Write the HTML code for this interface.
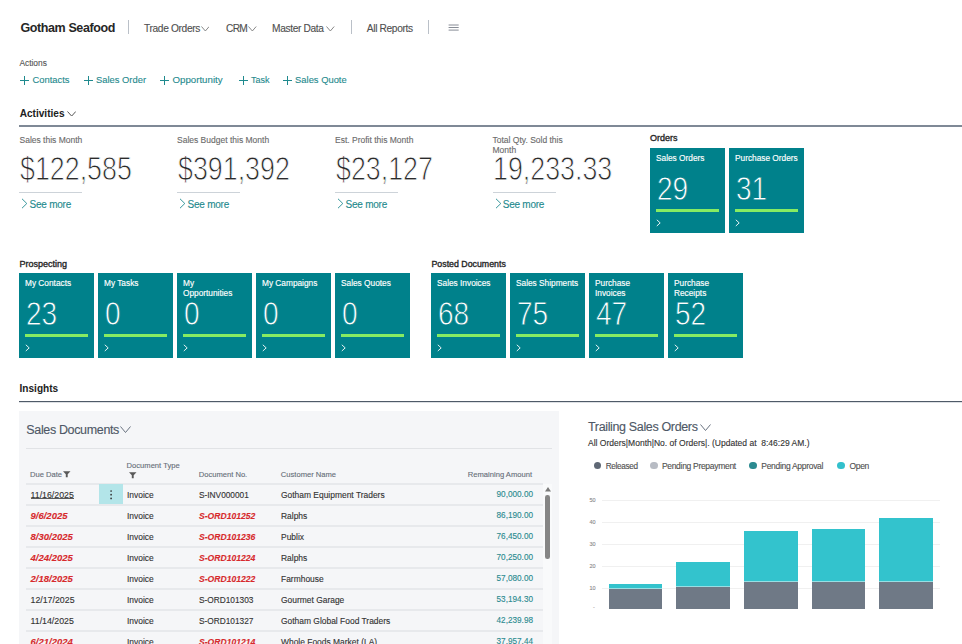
<!DOCTYPE html>
<html><head><meta charset="utf-8">
<style>
html,body{margin:0;padding:0;background:#fff;width:962px;height:644px;overflow:hidden;position:relative;font-family:"Liberation Sans",sans-serif;}
.a{position:absolute;line-height:1;white-space:nowrap;-webkit-text-stroke-width:0.12px;}
.tile .t{-webkit-text-stroke-width:0.15px;}
.nav{font-size:10.2px;color:#505050;top:24.1px;letter-spacing:-0.35px;}
.sep{position:absolute;width:1px;background:#bac0c8;top:20px;height:14px;}
.chev{display:inline-block;width:4px;height:4px;border-right:1px solid #7a7a7a;border-bottom:1px solid #7a7a7a;transform:rotate(45deg);margin-left:3px;position:relative;top:-3px;}
.act{font-size:9.4px;color:#1f8a8e;top:75.4px;}
.plus{position:absolute;width:9px;height:9px;}
.plus:before{content:"";position:absolute;left:4px;top:0;width:1px;height:9px;background:#1f8a8e;}
.plus:after{content:"";position:absolute;left:0;top:4px;width:9px;height:1px;background:#1f8a8e;}
.klbl{font-size:8.5px;color:#6b6b6b;top:136px;}
.big{font-size:32.5px;color:#2b2b2b;top:153.3px;transform-origin:0 0;transform:scaleX(0.825);-webkit-text-stroke:0.9px #fff;}
.kul{position:absolute;top:192px;height:1px;width:63px;background:#cdd3d9;}
.see{font-size:10px;color:#1f8a8e;top:200.4px;letter-spacing:-0.25px;}
.sch{position:absolute;width:5px;height:5px;border-right:1px solid #1f8a8e;border-bottom:1px solid #1f8a8e;transform:rotate(-45deg);}
.glbl{font-size:9px;font-weight:400;color:#262626;-webkit-text-stroke:0.35px #262626;}
.tile{position:absolute;width:75px;height:85px;background:#00818b;color:#fff;}
.tile .t{position:absolute;left:6px;top:5.2px;font-size:8.3px;line-height:10px;white-space:normal;width:66px;}
.tile .n{position:absolute;left:7px;top:23.7px;font-size:33px;line-height:1;transform-origin:0 0;transform:scaleX(0.85);-webkit-text-stroke:0.8px #00818b;}
.tile .g{position:absolute;left:6px;top:61px;width:63px;height:3px;background:#86ec62;}
.tile .c{position:absolute;left:5.5px;top:71.3px;}
.hd{font-size:7.6px;color:#666e78;}
.rw{font-size:8.45px;color:#333;}
</style></head><body>

<!-- header -->
<div class="a" style="left:20.5px;top:22.2px;font-size:12.5px;font-weight:700;color:#262626;-webkit-text-stroke-width:0;letter-spacing:-0.4px;">Gotham Seafood</div>
<div class="sep" style="left:128px;"></div>
<div class="a nav" style="left:144px;">Trade Orders</div>
<div class="a nav" style="left:226px;letter-spacing:-0.7px;">CRM</div>
<div class="a nav" style="left:272px;">Master Data</div>
<div class="sep" style="left:351px;"></div>
<div class="a nav" style="left:366.8px;">All Reports</div>
<div class="sep" style="left:428px;"></div>
<svg style="position:absolute;left:448px;top:22px" width="12" height="11" viewBox="0 0 12 11"><path d="M0.6 3H10.7M0.6 5.5H10.7M0.6 8.1H10.7" stroke="#7a808a" stroke-width="0.9" fill="none"/></svg>

<!-- actions -->
<div class="a" style="left:19.4px;top:59.3px;font-size:8.4px;color:#555;">Actions</div>
<div class="plus" style="left:20px;top:75.5px;"></div><div class="a act" style="left:32.5px;">Contacts</div>
<div class="plus" style="left:84px;top:75.5px;"></div><div class="a act" style="left:96px;">Sales Order</div>
<div class="plus" style="left:160px;top:75.5px;"></div><div class="a act" style="left:172.5px;font-size:9.7px;top:75.2px;">Opportunity</div>
<div class="plus" style="left:238.6px;top:75.5px;"></div><div class="a act" style="left:251.1px;font-size:9px;top:75.8px;">Task</div>
<div class="plus" style="left:282.5px;top:75.5px;"></div><div class="a act" style="left:295.1px;">Sales Quote</div>

<!-- activities -->
<div class="a" style="left:19.7px;top:108.8px;font-size:10.1px;font-weight:700;color:#212121;-webkit-text-stroke-width:0;">Activities</div>
<div style="position:absolute;left:19px;top:125px;width:943px;height:2px;background:#7f8996;"></div>

<div class="a klbl" style="left:19.5px;">Sales this Month</div>
<div class="a big" style="left:20px;">$122,585</div>
<div class="kul" style="left:19px;"></div>
<svg style="position:absolute;left:20.7px;top:198.3px" width="7" height="11" viewBox="0 0 7 11"><path d="M1 0.8L5.8 5.5L1 10.2" fill="none" stroke="#1f8a8e" stroke-width="0.9"/></svg><div class="a see" style="left:29.6px;">See more</div>

<div class="a klbl" style="left:177px;">Sales Budget this Month</div>
<div class="a big" style="left:178px;">$391,392</div>
<div class="kul" style="left:177px;"></div>
<svg style="position:absolute;left:178.7px;top:198.3px" width="7" height="11" viewBox="0 0 7 11"><path d="M1 0.8L5.8 5.5L1 10.2" fill="none" stroke="#1f8a8e" stroke-width="0.9"/></svg><div class="a see" style="left:187.6px;">See more</div>

<div class="a klbl" style="left:335px;">Est. Profit this Month</div>
<div class="a big" style="left:336px;">$23,127</div>
<div class="kul" style="left:335px;"></div>
<svg style="position:absolute;left:336.7px;top:198.3px" width="7" height="11" viewBox="0 0 7 11"><path d="M1 0.8L5.8 5.5L1 10.2" fill="none" stroke="#1f8a8e" stroke-width="0.9"/></svg><div class="a see" style="left:345.6px;">See more</div>

<div class="a klbl" style="left:492.5px;white-space:normal;width:80px;line-height:10px;top:134.5px;">Total Qty. Sold this Month</div>
<div class="a big" style="left:493px;">19,233.33</div>
<div class="kul" style="left:493px;"></div>
<svg style="position:absolute;left:494.7px;top:198.3px" width="7" height="11" viewBox="0 0 7 11"><path d="M1 0.8L5.8 5.5L1 10.2" fill="none" stroke="#1f8a8e" stroke-width="0.9"/></svg><div class="a see" style="left:502.8px;">See more</div>

<!-- orders -->
<div class="a glbl" style="left:650px;top:134.2px;">Orders</div>
<div class="tile" style="left:650px;top:148px;"><div class="t">Sales Orders</div><div class="n">29</div><div class="g"></div><svg class="c" width="6" height="8" viewBox="0 0 6 8"><path d="M0.8 0.8L4.2 3.9L0.8 7" fill="none" stroke="#fff" stroke-width="0.9"/></svg></div>
<div class="tile" style="left:729px;top:148px;"><div class="t">Purchase Orders</div><div class="n">31</div><div class="g"></div><svg class="c" width="6" height="8" viewBox="0 0 6 8"><path d="M0.8 0.8L4.2 3.9L0.8 7" fill="none" stroke="#fff" stroke-width="0.9"/></svg></div>

<!-- prospecting -->
<div class="a glbl" style="left:19.4px;top:259.7px;">Prospecting</div>
<div class="tile" style="left:19px;top:273px;"><div class="t">My Contacts</div><div class="n">23</div><div class="g"></div><svg class="c" width="6" height="8" viewBox="0 0 6 8"><path d="M0.8 0.8L4.2 3.9L0.8 7" fill="none" stroke="#fff" stroke-width="0.9"/></svg></div>
<div class="tile" style="left:98px;top:273px;"><div class="t">My Tasks</div><div class="n">0</div><div class="g"></div><svg class="c" width="6" height="8" viewBox="0 0 6 8"><path d="M0.8 0.8L4.2 3.9L0.8 7" fill="none" stroke="#fff" stroke-width="0.9"/></svg></div>
<div class="tile" style="left:177px;top:273px;"><div class="t">My<br>Opportunities</div><div class="n">0</div><div class="g"></div><svg class="c" width="6" height="8" viewBox="0 0 6 8"><path d="M0.8 0.8L4.2 3.9L0.8 7" fill="none" stroke="#fff" stroke-width="0.9"/></svg></div>
<div class="tile" style="left:256px;top:273px;"><div class="t">My Campaigns</div><div class="n">0</div><div class="g"></div><svg class="c" width="6" height="8" viewBox="0 0 6 8"><path d="M0.8 0.8L4.2 3.9L0.8 7" fill="none" stroke="#fff" stroke-width="0.9"/></svg></div>
<div class="tile" style="left:335px;top:273px;"><div class="t">Sales Quotes</div><div class="n">0</div><div class="g"></div><svg class="c" width="6" height="8" viewBox="0 0 6 8"><path d="M0.8 0.8L4.2 3.9L0.8 7" fill="none" stroke="#fff" stroke-width="0.9"/></svg></div>

<div class="a glbl" style="left:431.5px;top:259.7px;font-size:8.8px;">Posted Documents</div>
<div class="tile" style="left:431px;top:273px;"><div class="t">Sales Invoices</div><div class="n">68</div><div class="g"></div><svg class="c" width="6" height="8" viewBox="0 0 6 8"><path d="M0.8 0.8L4.2 3.9L0.8 7" fill="none" stroke="#fff" stroke-width="0.9"/></svg></div>
<div class="tile" style="left:510px;top:273px;"><div class="t">Sales Shipments</div><div class="n">75</div><div class="g"></div><svg class="c" width="6" height="8" viewBox="0 0 6 8"><path d="M0.8 0.8L4.2 3.9L0.8 7" fill="none" stroke="#fff" stroke-width="0.9"/></svg></div>
<div class="tile" style="left:589px;top:273px;"><div class="t">Purchase<br>Invoices</div><div class="n">47</div><div class="g"></div><svg class="c" width="6" height="8" viewBox="0 0 6 8"><path d="M0.8 0.8L4.2 3.9L0.8 7" fill="none" stroke="#fff" stroke-width="0.9"/></svg></div>
<div class="tile" style="left:668px;top:273px;"><div class="t">Purchase<br>Receipts</div><div class="n">52</div><div class="g"></div><svg class="c" width="6" height="8" viewBox="0 0 6 8"><path d="M0.8 0.8L4.2 3.9L0.8 7" fill="none" stroke="#fff" stroke-width="0.9"/></svg></div>

<!-- INSIGHTS -->
<div class="a" style="left:19.5px;top:383.5px;font-size:10.1px;font-weight:700;color:#212121;-webkit-text-stroke-width:0;">Insights</div>
<div style="position:absolute;left:19px;top:401px;width:943px;height:1px;background:#4f5a68;"></div><div style="position:absolute;left:19px;top:402px;width:943px;height:1px;background:#dde0e4;"></div>
<div style="position:absolute;left:19px;top:411px;width:540px;height:233px;background:#f5f6f8;"></div>
<div class="a" style="left:26.3px;top:423.8px;font-size:12.5px;color:#4e5866;letter-spacing:-0.35px;">Sales Documents</div>
<div style="position:absolute;left:26px;top:448px;width:526px;height:1px;background:#e1e3e6;"></div>
<div class="a hd" style="left:30px;top:470.8px;">Due Date</div>
<svg style="position:absolute;left:63px;top:470.6px" width="8" height="7" viewBox="0 0 8 7"><path d="M0 0.2H7.5L4.7 3.2V6.3H2.8V3.2Z" fill="#595959"/></svg>
<div class="a hd" style="left:126.6px;top:462.2px;">Document Type</div>
<svg style="position:absolute;left:129px;top:471.8px" width="8" height="7" viewBox="0 0 8 7"><path d="M0 0.2H7.5L4.7 3.2V6.3H2.8V3.2Z" fill="#595959"/></svg>
<div class="a hd" style="left:198.7px;top:470.8px;">Document No.</div>
<div class="a hd" style="left:280.8px;top:470.8px;">Customer Name</div>
<div class="a hd" style="right:430px;top:470.8px;">Remaining Amount</div>
<div style="position:absolute;left:26px;top:483px;width:517px;height:2px;background:#e7e9ec;"></div>
<div style="position:absolute;left:99px;top:484px;width:24px;height:20px;background:#b3e5e9;"></div>
<svg style="position:absolute;left:108px;top:488px" width="6" height="13" viewBox="0 0 6 13"><circle cx="3.1" cy="3" r="0.85" fill="#333"/><circle cx="3.1" cy="6.7" r="0.85" fill="#333"/><circle cx="3.1" cy="10.4" r="0.85" fill="#333"/></svg>
<div style="position:absolute;left:543px;top:484px;width:9px;height:160px;background:#f9fafb;"></div>
<svg style="position:absolute;left:544.5px;top:486.5px" width="6" height="5" viewBox="0 0 6 5"><path d="M3 0L6 4.5H0Z" fill="#7a7a7a"/></svg>
<div style="position:absolute;left:545px;top:494.5px;width:4.6px;height:64px;border-radius:2.3px;background:#858585;"></div>

<div class="a rw" style="left:30.5px;top:491.20px;color:#333;font-size:8.8px;">11/16/2025</div>
<div class="a rw" style="left:127px;top:491.20px;">Invoice</div>
<div class="a rw" style="left:199px;top:491.20px;color:#333;font-size:8.3px;">S-INV000001</div>
<div class="a rw" style="left:281px;top:491.20px;">Gotham Equipment Traders</div>
<div class="a rw" style="right:429px;top:491.20px;color:#2a8a8f;font-size:8.2px;">90,000.00</div>
<div style="position:absolute;left:26px;top:504px;width:517px;height:2px;background:#e7e9ec;"></div>
<div class="a rw" style="left:30.5px;top:511.33px;font-weight:700;font-style:italic;color:#d72a2d;font-size:9.5px;">9/6/2025</div>
<div class="a rw" style="left:127px;top:512.13px;">Invoice</div>
<div class="a rw" style="left:199px;top:512.13px;font-weight:700;font-style:italic;color:#d72a2d;font-size:8.6px;">S-ORD101252</div>
<div class="a rw" style="left:281px;top:512.13px;">Ralphs</div>
<div class="a rw" style="right:429px;top:512.13px;color:#2a8a8f;font-size:8.2px;">86,190.00</div>
<div style="position:absolute;left:26px;top:525px;width:517px;height:2px;background:#e7e9ec;"></div>
<div class="a rw" style="left:30.5px;top:532.26px;font-weight:700;font-style:italic;color:#d72a2d;font-size:9.5px;">8/30/2025</div>
<div class="a rw" style="left:127px;top:533.06px;">Invoice</div>
<div class="a rw" style="left:199px;top:533.06px;font-weight:700;font-style:italic;color:#d72a2d;font-size:8.6px;">S-ORD101236</div>
<div class="a rw" style="left:281px;top:533.06px;">Publix</div>
<div class="a rw" style="right:429px;top:533.06px;color:#2a8a8f;font-size:8.2px;">76,450.00</div>
<div style="position:absolute;left:26px;top:546px;width:517px;height:2px;background:#e7e9ec;"></div>
<div class="a rw" style="left:30.5px;top:553.19px;font-weight:700;font-style:italic;color:#d72a2d;font-size:9.5px;">4/24/2025</div>
<div class="a rw" style="left:127px;top:553.99px;">Invoice</div>
<div class="a rw" style="left:199px;top:553.99px;font-weight:700;font-style:italic;color:#d72a2d;font-size:8.6px;">S-ORD101224</div>
<div class="a rw" style="left:281px;top:553.99px;">Ralphs</div>
<div class="a rw" style="right:429px;top:553.99px;color:#2a8a8f;font-size:8.2px;">70,250.00</div>
<div style="position:absolute;left:26px;top:567px;width:517px;height:2px;background:#e7e9ec;"></div>
<div class="a rw" style="left:30.5px;top:574.12px;font-weight:700;font-style:italic;color:#d72a2d;font-size:9.5px;">2/18/2025</div>
<div class="a rw" style="left:127px;top:574.92px;">Invoice</div>
<div class="a rw" style="left:199px;top:574.92px;font-weight:700;font-style:italic;color:#d72a2d;font-size:8.6px;">S-ORD101222</div>
<div class="a rw" style="left:281px;top:574.92px;">Farmhouse</div>
<div class="a rw" style="right:429px;top:574.92px;color:#2a8a8f;font-size:8.2px;">57,080.00</div>
<div style="position:absolute;left:26px;top:588px;width:517px;height:2px;background:#e7e9ec;"></div>
<div class="a rw" style="left:30.5px;top:595.85px;color:#333;font-size:8.8px;">12/17/2025</div>
<div class="a rw" style="left:127px;top:595.85px;">Invoice</div>
<div class="a rw" style="left:199px;top:595.85px;color:#333;font-size:8.3px;">S-ORD101303</div>
<div class="a rw" style="left:281px;top:595.85px;">Gourmet Garage</div>
<div class="a rw" style="right:429px;top:595.85px;color:#2a8a8f;font-size:8.2px;">53,194.30</div>
<div style="position:absolute;left:26px;top:609px;width:517px;height:2px;background:#e7e9ec;"></div>
<div class="a rw" style="left:30.5px;top:616.78px;color:#333;font-size:8.8px;">11/14/2025</div>
<div class="a rw" style="left:127px;top:616.78px;">Invoice</div>
<div class="a rw" style="left:199px;top:616.78px;color:#333;font-size:8.3px;">S-ORD101327</div>
<div class="a rw" style="left:281px;top:616.78px;">Gotham Global Food Traders</div>
<div class="a rw" style="right:429px;top:616.78px;color:#2a8a8f;font-size:8.2px;">42,239.98</div>
<div style="position:absolute;left:26px;top:630px;width:517px;height:2px;background:#e7e9ec;"></div>
<div class="a rw" style="left:30.5px;top:636.91px;font-weight:700;font-style:italic;color:#d72a2d;font-size:9.5px;">6/21/2024</div>
<div class="a rw" style="left:127px;top:637.71px;">Invoice</div>
<div class="a rw" style="left:199px;top:637.71px;font-weight:700;font-style:italic;color:#d72a2d;font-size:8.6px;">S-ORD101214</div>
<div class="a rw" style="left:281px;top:637.71px;">Whole Foods Market (LA)</div>
<div class="a rw" style="right:429px;top:637.71px;color:#2a8a8f;font-size:8.2px;">37,957.44</div>
<div style="position:absolute;left:30.5px;top:498px;width:43.5px;height:1px;background:#5a5a5a;"></div>
<!-- CHART -->
<div class="a" style="left:588px;top:420.5px;font-size:12.5px;color:#4e5866;letter-spacing:-0.35px;">Trailing Sales Orders</div>
<div class="a" style="left:588px;top:439px;font-size:8.53px;color:#333;">All Orders|Month|No. of Orders|. (Updated at &nbsp;8:46:29 AM.)</div>

<div style="position:absolute;left:593.7px;top:461.9px;width:7.6px;height:7.6px;border-radius:50%;background:#5f6875;"></div>
<div class="a" style="left:605.8px;top:462.8px;font-size:8.2px;color:#505050;letter-spacing:-0.35px;">Released</div>
<div style="position:absolute;left:650.3px;top:461.9px;width:7.6px;height:7.6px;border-radius:50%;background:#b8bcc4;"></div>
<div class="a" style="left:661.9px;top:461.9px;font-size:8.5px;color:#505050;letter-spacing:-0.3px;">Pending Prepayment</div>
<div style="position:absolute;left:749.1px;top:461.9px;width:7.6px;height:7.6px;border-radius:50%;background:#2b8a90;"></div>
<div class="a" style="left:761.3px;top:461.9px;font-size:8.5px;color:#505050;letter-spacing:-0.3px;">Pending Approval</div>
<div style="position:absolute;left:837.3px;top:461.9px;width:7.6px;height:7.6px;border-radius:50%;background:#33c0cc;"></div>
<div class="a" style="left:849.4px;top:461.9px;font-size:8.5px;color:#505050;letter-spacing:-0.3px;">Open</div>
<div style="position:absolute;left:602px;top:500px;width:338px;height:1px;background:#f0f0f0;"></div>
<div class="a" style="left:589.5px;top:498.2px;font-size:5.5px;color:#8a8a8a;">50</div>
<div style="position:absolute;left:602px;top:522px;width:338px;height:1px;background:#f0f0f0;"></div>
<div class="a" style="left:589.5px;top:520.2px;font-size:5.5px;color:#8a8a8a;">40</div>
<div style="position:absolute;left:602px;top:544px;width:338px;height:1px;background:#f0f0f0;"></div>
<div class="a" style="left:589.5px;top:542.2px;font-size:5.5px;color:#8a8a8a;">30</div>
<div style="position:absolute;left:602px;top:566px;width:338px;height:1px;background:#f0f0f0;"></div>
<div class="a" style="left:589.5px;top:564.2px;font-size:5.5px;color:#8a8a8a;">20</div>
<div style="position:absolute;left:602px;top:588px;width:338px;height:1px;background:#f0f0f0;"></div>
<div class="a" style="left:589.5px;top:586.2px;font-size:5.5px;color:#8a8a8a;">10</div>
<div class="a" style="left:593px;top:605px;font-size:5.5px;color:#8a8a8a;">-</div>
<div style="position:absolute;left:608.7px;top:583.8px;width:53.6px;height:4.2px;background:#33c3cd;"></div>
<div style="position:absolute;left:608.7px;top:588px;width:53.6px;height:1px;background:#98dfe4;"></div>
<div style="position:absolute;left:608.7px;top:589px;width:53.6px;height:19.8px;background:#6f7986;"></div>
<div style="position:absolute;left:676.1px;top:562px;width:53.9px;height:24.0px;background:#33c3cd;"></div>
<div style="position:absolute;left:676.1px;top:586px;width:53.9px;height:1px;background:#98dfe4;"></div>
<div style="position:absolute;left:676.1px;top:587px;width:53.9px;height:21.8px;background:#6f7986;"></div>
<div style="position:absolute;left:743.7px;top:531.2px;width:54.0px;height:49.8px;background:#33c3cd;"></div>
<div style="position:absolute;left:743.7px;top:581px;width:54.0px;height:1px;background:#98dfe4;"></div>
<div style="position:absolute;left:743.7px;top:582px;width:54.0px;height:26.8px;background:#6f7986;"></div>
<div style="position:absolute;left:811.8px;top:528.8px;width:53.5px;height:52.2px;background:#33c3cd;"></div>
<div style="position:absolute;left:811.8px;top:581px;width:53.5px;height:1px;background:#98dfe4;"></div>
<div style="position:absolute;left:811.8px;top:582px;width:53.5px;height:26.8px;background:#6f7986;"></div>
<div style="position:absolute;left:879.2px;top:518px;width:53.7px;height:63.0px;background:#33c3cd;"></div>
<div style="position:absolute;left:879.2px;top:581px;width:53.7px;height:1px;background:#98dfe4;"></div>
<div style="position:absolute;left:879.2px;top:582px;width:53.7px;height:26.8px;background:#6f7986;"></div>
<svg style="position:absolute;left:200.7px;top:25.7px" width="8.7" height="5.5" viewBox="0 0 8.7 5.5"><path d="M0.5 0.5L4.35 5.0L8.2 0.5" fill="none" stroke="#7a7a7a" stroke-width="0.9"/></svg>
<svg style="position:absolute;left:248px;top:25.7px" width="8.7" height="5.5" viewBox="0 0 8.7 5.5"><path d="M0.5 0.5L4.35 5.0L8.2 0.5" fill="none" stroke="#7a7a7a" stroke-width="0.9"/></svg>
<svg style="position:absolute;left:326px;top:25.7px" width="8.7" height="5.5" viewBox="0 0 8.7 5.5"><path d="M0.5 0.5L4.35 5.0L8.2 0.5" fill="none" stroke="#7a7a7a" stroke-width="0.9"/></svg>
<svg style="position:absolute;left:66.5px;top:110.5px" width="9.3" height="5.6" viewBox="0 0 9.3 5.6"><path d="M0.5 0.5L4.65 5.1L8.8 0.5" fill="none" stroke="#555" stroke-width="1"/></svg>
<svg style="position:absolute;left:120.3px;top:425.9px" width="11" height="7" viewBox="0 0 11 7"><path d="M0.5 0.5L5.50 6.5L10.5 0.5" fill="none" stroke="#6a7380" stroke-width="1"/></svg>
<svg style="position:absolute;left:700px;top:423.8px" width="11" height="7" viewBox="0 0 11 7"><path d="M0.5 0.5L5.50 6.5L10.5 0.5" fill="none" stroke="#6a7380" stroke-width="1"/></svg>
</body></html>
